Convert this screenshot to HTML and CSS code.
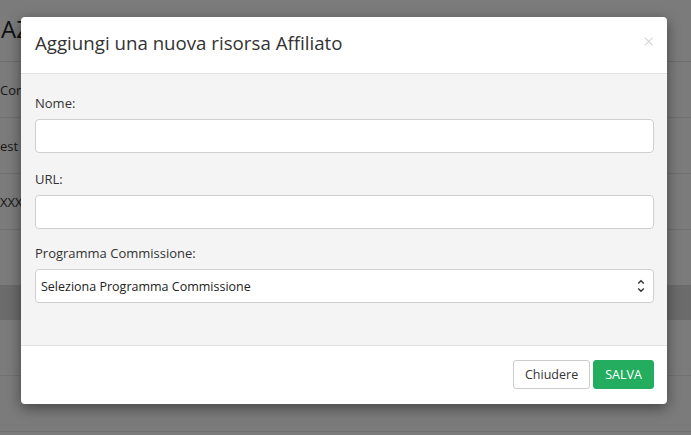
FILE: index.html
```html
<!DOCTYPE html>
<html lang="it">
<head>
<meta charset="utf-8">
<title>Aggiungi risorsa</title>
<link rel="stylesheet" href="styles.css">
</head>
<body>
<div class="page">
  <div class="page-head"><span class="page-title">AZ</span></div>
  <div class="row"><span>Cor</span></div>
  <div class="row"><span>est</span></div>
  <div class="row"><span>XXX</span></div>
  <div class="row"></div>
  <div class="band"></div>
  <div class="row"></div>
  <div class="row"></div>
</div>

<div class="modal">
  <div class="modal-header">
    <h4 class="modal-title">Aggiungi una nuova risorsa Affiliato</h4>
    <span class="close">&times;</span>
  </div>
  <div class="modal-body">
    <div class="form-group">
      <label class="label">Nome:</label>
      <div class="input"></div>
    </div>
    <div class="form-group">
      <label class="label">URL:</label>
      <div class="input"></div>
    </div>
    <div class="form-group form-group-tight">
      <label class="label">Programma Commissione:</label>
      <div class="input select">
        <span>Seleziona Programma Commissione</span>
        <svg class="arrows" width="8" height="14" viewBox="0 0 8 14"><path d="M1.2 4.6 L4 1.8 L6.8 4.6 M1.2 9.4 L4 12.2 L6.8 9.4" fill="none" stroke="#333" stroke-width="1.4"/></svg>
      </div>
    </div>
  </div>
  <div class="modal-footer">
    <button class="btn btn-default">Chiudere</button>
    <button class="btn btn-success">SALVA</button>
  </div>
</div>
</body>
</html>
```
FILE: styles.css
```css
html, body {
  margin: 0;
  padding: 0;
}
body {
  background: #7b7b7b;
  font-family: "Open Sans", "Liberation Sans", sans-serif;
  width: 691px;
  height: 435px;
  overflow: hidden;
  position: relative;
}
.page {
  display: flex;
  flex-direction: column;
}
.page-head {
  height: 61px;
  border-bottom: 1px solid #6e6e6e;
  display: flex;
  align-items: center;
  padding-left: 1px;
}
.page-title {
  font-size: 24px;
  color: #111;
  margin-top: -4px;
}
.row {
  height: 55px;
  border-bottom: 1px solid #717171;
  display: flex;
  align-items: center;
  font-size: 13px;
  color: #161616;
}
.band {
  height: 35px;
  background: #6b6b6b;
  margin-top: -1px;
}
.modal {
  position: absolute;
  left: 21px;
  top: 17px;
  width: 646px;
  background: #fff;
  border-radius: 4px;
  box-shadow: 0 4px 14px rgba(0,0,0,0.45);
  overflow: hidden;
}
.modal-header {
  height: 57px;
  border-bottom: 1px solid #e3e3e3;
  display: flex;
  align-items: center;
  justify-content: space-between;
  padding: 0 14px;
  box-sizing: border-box;
}
.modal-title {
  margin: 0;
  font-size: 18.7px;
  font-weight: 400;
  color: #333;
  margin-top: -6px;
}
.close {
  font-size: 19px;
  color: #c9c9c9;
  margin-top: -8px;
  margin-right: -1px;
  font-weight: 300;
}
.modal-body {
  background: #f4f4f4;
  padding: 20px 13px 42px 14px;
  display: flex;
  flex-direction: column;
  gap: 17px;
  border-bottom: 1px solid #e3e3e3;
}
.form-group {
  display: flex;
  flex-direction: column;
  gap: 6px;
}
.form-group-tight {
  margin-top: -2px;
}
.label {
  font-size: 13px;
  line-height: 19px;
  color: #333;
}
.input {
  height: 34px;
  box-sizing: border-box;
  background: #fff;
  border: 1px solid #cfcfcf;
  border-radius: 4px;
}
.select {
  display: flex;
  align-items: center;
  justify-content: space-between;
  padding: 0 8px 0 5px;
  font-size: 12.5px;
  color: #222;
}
.arrows {
  display: block;
}
.modal-footer {
  height: 58px;
  display: flex;
  align-items: center;
  justify-content: flex-end;
  gap: 3px;
  padding: 0 13px 1px;
  box-sizing: border-box;
}
.btn {
  height: 29px;
  font-family: "Open Sans", "Liberation Sans", sans-serif;
  font-size: 12.5px;
  border-radius: 3px;
  padding: 0 11px;
  cursor: pointer;
}
.btn-default {
  background: #fff;
  border: 1px solid #cccccc;
  color: #333;
  width: 77px;
}
.btn-success {
  background: #25ad5f;
  border: 1px solid #25ad5f;
  color: #fff;
  width: 61px;
}
```
